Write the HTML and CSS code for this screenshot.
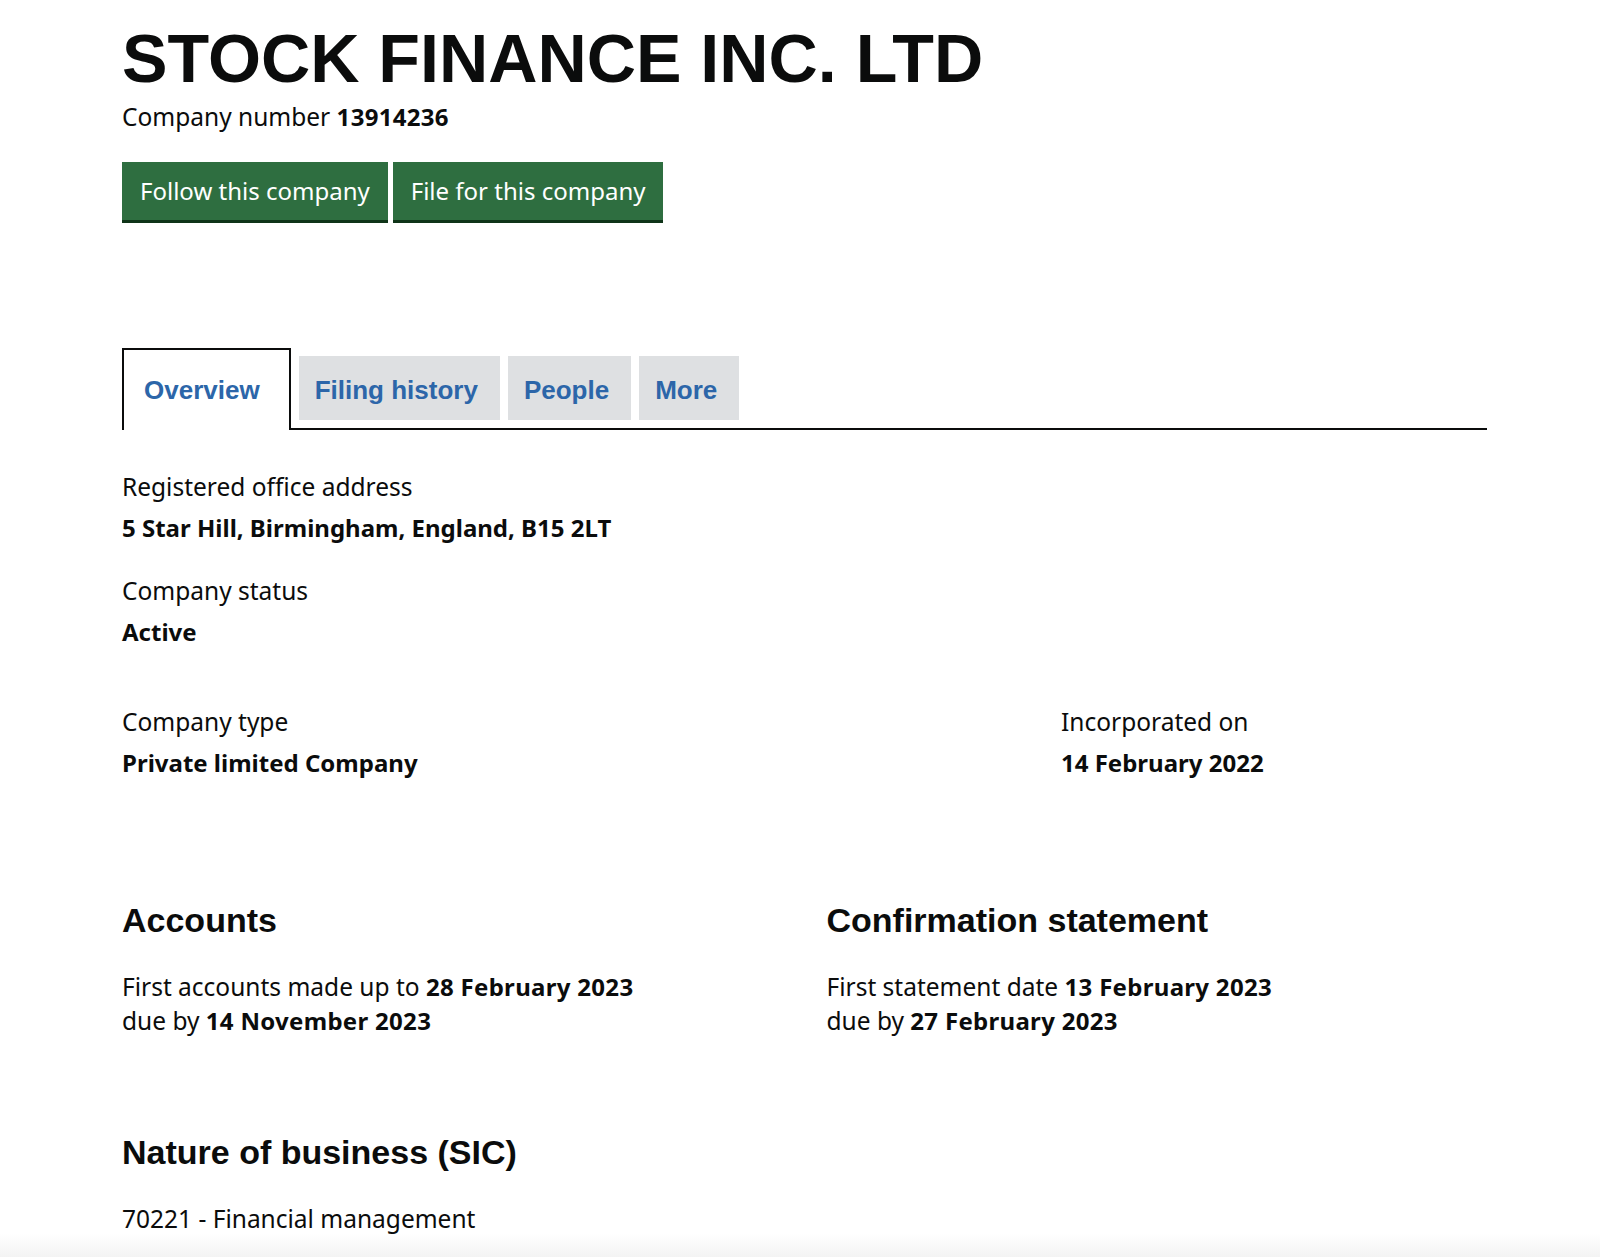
FILE: index.html
```html
<!DOCTYPE html>
<html lang="en">
<head>
<meta charset="utf-8">
<title>STOCK FINANCE INC. LTD - Overview</title>
<link rel="stylesheet" href="styles.css">
</head>
<body>
<main class="page">
  <h1 class="title">STOCK FINANCE INC. LTD</h1>
  <p class="company-number">Company number <strong>13914236</strong></p>
  <div class="actions">
    <a class="button" href="#">Follow this company</a>
    <a class="button" href="#">File for this company</a>
  </div>

  <nav class="tabs">
    <ul class="tabs-list">
      <li class="tab tab-current"><a href="#">Overview</a></li>
      <li class="tab"><a href="#">Filing history</a></li>
      <li class="tab"><a href="#">People</a></li>
      <li class="tab"><a href="#">More</a></li>
    </ul>
  </nav>

  <dl class="summary">
    <div class="item">
      <dt>Registered office address</dt>
      <dd>5 Star Hill, Birmingham, England, B15 2LT</dd>
    </div>
    <div class="item">
      <dt>Company status</dt>
      <dd>Active</dd>
    </div>
  </dl>

  <dl class="summary summary-row">
    <div class="item">
      <dt>Company type</dt>
      <dd>Private limited Company</dd>
    </div>
    <div class="item">
      <dt>Incorporated on</dt>
      <dd>14 February 2022</dd>
    </div>
  </dl>

  <div class="filings">
    <section class="filing">
      <h2 class="heading">Accounts</h2>
      <p class="text">First accounts made up to <strong>28 February 2023</strong><br>due by <strong>14 November 2023</strong></p>
    </section>
    <section class="filing">
      <h2 class="heading">Confirmation statement</h2>
      <p class="text">First statement date <strong>13 February 2023</strong><br>due by <strong>27 February 2023</strong></p>
    </section>
  </div>

  <section class="sic">
    <h2 class="heading">Nature of business (SIC)</h2>
    <p class="text">70221 - Financial management</p>
  </section>
</main>
</body>
</html>
```

FILE: styles.css
```css
html {
  background: linear-gradient(to bottom, #ffffff 0, #ffffff 1234px, #f3f3f3 1257px);
  min-height: 100%;
}

body {
  margin: 0;
  color: #0b0c0c;
  font-family: "Noto Sans", "Liberation Sans", Arial, sans-serif;
  font-size: 24.5px;
  line-height: 34px;
}

.page {
  width: 1365px;
  margin-left: 122px;
  padding-top: 24px;
}

.title {
  margin: 0;
  font-family: "Liberation Sans", Arial, sans-serif;
  font-weight: 700;
  font-size: 68.2px;
  line-height: 68px;
}

.company-number {
  margin: 8px 0 0;
}

.company-number strong,
dd,
.text strong {
  font-weight: 700;
  font-size: 24px;
}

.company-number strong,
.text strong {
  letter-spacing: 0.3px;
}

.actions {
  display: flex;
  gap: 5px;
  margin-top: 28px;
}

.button {
  display: block;
  height: 58px;
  padding: 0 18px;
  font-size: 24px;
  line-height: 57px;
  background: #2e6e40;
  color: #ffffff;
  text-decoration: none;
  box-shadow: 0 3px 0 #0f3418;
}

.tabs {
  margin-top: 128px;
}

.tabs-list {
  display: flex;
  align-items: flex-end;
  gap: 8px;
  margin: 0;
  padding: 0;
  list-style: none;
  border-bottom: 2px solid #0b0c0c;
}

.tab {
  margin-bottom: 8px;
  height: 64px;
  background: #dee0e2;
}

.tab a {
  display: block;
  padding: 5px 22px 0 16px;
  font-family: "Liberation Sans", Arial, sans-serif;
  font-weight: 700;
  font-size: 26px;
  line-height: 59px;
  color: #2c66a9;
  text-decoration: none;
}

.tab-current {
  height: 80px;
  margin-bottom: -2px;
  background: #ffffff;
  border: 2px solid #0b0c0c;
  border-bottom: 0;
}

.tab-current a {
  padding: 11px 29px 10px 20px;
}

.summary {
  margin: 40px 0 0;
}

.item + .item {
  margin-top: 29px;
}

dt {
  margin: 0 0 7px;
}

dd {
  margin: 0;
}

.summary-row {
  display: grid;
  grid-template-columns: 895px 1fr;
  column-gap: 44px;
  margin-top: 56px;
}

.summary-row .item + .item {
  margin-top: 0;
}

.filings {
  display: grid;
  grid-template-columns: 1fr 1fr;
  column-gap: 44px;
  margin-top: 120px;
}

.heading {
  margin: 0;
  font-family: "Liberation Sans", Arial, sans-serif;
  font-weight: 700;
  font-size: 34px;
  line-height: 40px;
}

.text {
  margin: 30px 0 0;
}

.sic {
  margin-top: 94px;
}
```
